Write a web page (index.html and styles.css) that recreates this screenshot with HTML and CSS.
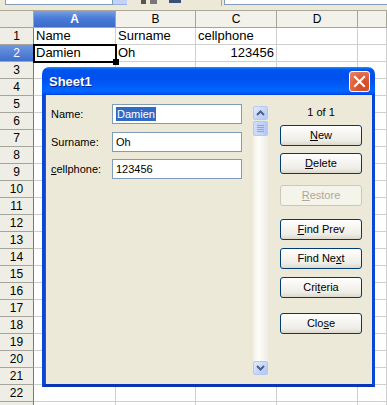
FILE: index.html
```html
<!DOCTYPE html>
<html>
<head>
<meta charset="utf-8">
<link rel="stylesheet" href="styles.css">
</head>
<body>
<div class="toolbar">
  <div class="namebox"></div>
  <div class="dropbtn"></div>
  <div class="tb-icon i1"></div>
  <div class="tb-icon i2"></div>
  <div class="tb-sep"></div>
  <div class="formula"></div>
</div>
<div class="sheet">
  <div class="h corner"></div><div class="h colsel">A</div><div class="h">B</div><div class="h">C</div><div class="h">D</div><div class="h"></div>
  <div class="rh">1</div><div class="c">Name</div><div class="c">Surname</div><div class="c">cellphone</div><div class="c"></div><div class="c"></div>
  <div class="rh rowsel">2</div><div class="c active">Damien</div><div class="c">Oh</div><div class="c num">123456</div><div class="c"></div><div class="c"></div>
  <div class="rh">3</div><div class="c"></div><div class="c"></div><div class="c"></div><div class="c"></div><div class="c"></div>
  <div class="rh">4</div><div class="c"></div><div class="c"></div><div class="c"></div><div class="c"></div><div class="c"></div>
  <div class="rh">5</div><div class="c"></div><div class="c"></div><div class="c"></div><div class="c"></div><div class="c"></div>
  <div class="rh">6</div><div class="c"></div><div class="c"></div><div class="c"></div><div class="c"></div><div class="c"></div>
  <div class="rh">7</div><div class="c"></div><div class="c"></div><div class="c"></div><div class="c"></div><div class="c"></div>
  <div class="rh">8</div><div class="c"></div><div class="c"></div><div class="c"></div><div class="c"></div><div class="c"></div>
  <div class="rh">9</div><div class="c"></div><div class="c"></div><div class="c"></div><div class="c"></div><div class="c"></div>
  <div class="rh">10</div><div class="c"></div><div class="c"></div><div class="c"></div><div class="c"></div><div class="c"></div>
  <div class="rh">11</div><div class="c"></div><div class="c"></div><div class="c"></div><div class="c"></div><div class="c"></div>
  <div class="rh">12</div><div class="c"></div><div class="c"></div><div class="c"></div><div class="c"></div><div class="c"></div>
  <div class="rh">13</div><div class="c"></div><div class="c"></div><div class="c"></div><div class="c"></div><div class="c"></div>
  <div class="rh">14</div><div class="c"></div><div class="c"></div><div class="c"></div><div class="c"></div><div class="c"></div>
  <div class="rh">15</div><div class="c"></div><div class="c"></div><div class="c"></div><div class="c"></div><div class="c"></div>
  <div class="rh">16</div><div class="c"></div><div class="c"></div><div class="c"></div><div class="c"></div><div class="c"></div>
  <div class="rh">17</div><div class="c"></div><div class="c"></div><div class="c"></div><div class="c"></div><div class="c"></div>
  <div class="rh">18</div><div class="c"></div><div class="c"></div><div class="c"></div><div class="c"></div><div class="c"></div>
  <div class="rh">19</div><div class="c"></div><div class="c"></div><div class="c"></div><div class="c"></div><div class="c"></div>
  <div class="rh">20</div><div class="c"></div><div class="c"></div><div class="c"></div><div class="c"></div><div class="c"></div>
  <div class="rh">21</div><div class="c"></div><div class="c"></div><div class="c"></div><div class="c"></div><div class="c"></div>
  <div class="rh">22</div><div class="c"></div><div class="c"></div><div class="c"></div><div class="c"></div><div class="c"></div>
  <div class="rh"></div><div class="c"></div><div class="c"></div><div class="c"></div><div class="c"></div><div class="c"></div>
</div>

<div class="dialog">
  <div class="titlebar">
    <span class="title">Sheet1</span>
    <span class="closex">
      <svg width="13" height="13" viewBox="0 0 13 13"><path d="M2 2 L11 11 M11 2 L2 11" stroke="#fff" stroke-width="2.2" stroke-linecap="square"/></svg>
    </span>
  </div>
  <div class="dbody">
    <div class="form">
      <div class="field f1"><span class="lbl">Name:</span><div class="input"><span class="sel">Damien</span></div></div>
      <div class="field f2"><span class="lbl">Surname:</span><div class="input">Oh</div></div>
      <div class="field f3"><span class="lbl"><u>c</u>ellphone:</span><div class="input">123456</div></div>
    </div>
    <div class="scrollbar">
      <div class="sbbtn">
        <svg width="9" height="6" viewBox="0 0 9 6"><path d="M1 5 L4.5 1.5 L8 5" fill="none" stroke="#4d6185" stroke-width="2"/></svg>
      </div>
      <div class="thumb"><i></i><i></i><i></i><i></i></div>
      <div class="track"></div>
      <div class="sbbtn">
        <svg width="9" height="6" viewBox="0 0 9 6"><path d="M1 1 L4.5 4.5 L8 1" fill="none" stroke="#4d6185" stroke-width="2"/></svg>
      </div>
    </div>
    <div class="actions">
      <div class="count">1 of 1</div>
      <div class="btn b-new"><u>N</u>ew</div>
      <div class="btn b-del"><u>D</u>elete</div>
      <div class="btn b-res disabled"><u>R</u>estore</div>
      <div class="btn b-prev"><u>F</u>ind Prev</div>
      <div class="btn b-next">Find Ne<u>x</u>t</div>
      <div class="btn b-crit">Cri<u>t</u>eria</div>
      <div class="btn b-close">Clo<u>s</u>e</div>
    </div>
  </div>
</div>
</body>
</html>
```
FILE: styles.css
```css
* { box-sizing: border-box; }
html, body { margin: 0; padding: 0; }
body {
  width: 387px;
  height: 405px;
  overflow: hidden;
  position: relative;
  background: #fff;
  font-family: "Liberation Sans", Arial, sans-serif;
  color: #000;
}

/* toolbar remnant */
.toolbar {
  height: 10px;
  background: #ece9d8;
  display: flex;
  align-items: flex-start;
}
.namebox {
  margin-left: 5px;
  width: 108px;
  height: 5px;
  background: #fff;
  border: 1px solid #7f9db9;
  border-top: none;
}
.dropbtn {
  width: 14px;
  height: 5px;
  background: #c3d3f8;
  border-bottom: 1px solid #98b0e0;
}
.tb-icon { height: 4px; }
.i1 { margin-left: 14px; width: 16px; background: linear-gradient(90deg, #555 0 30%, transparent 30% 55%, #777 55% 100%); }
.i2 { margin-left: 12px; width: 12px; background: #3a4f7a; height: 3px; }
.tb-sep { margin-left: 40px; width: 1px; height: 6px; background: #aca899; }
.formula {
  margin-left: 2px;
  flex: 1;
  height: 5px;
  background: #fff;
  border-left: 1px solid #7f9db9;
  border-bottom: 1px solid #7f9db9;
}

/* sheet grid */
.sheet {
  display: grid;
  grid-template-columns: 34px 82px 80px 81px 81px 1fr;
  grid-auto-rows: 17px;
  border-top: 1px solid #aca899;
  font-size: 13px;
}
.h {
  background: #f2f1ea;
  border-right: 1px solid #a6a59c;
  border-bottom: 1px solid #a6a59c;
  font-size: 12px;
  text-align: center;
  line-height: 16px;
  color: #000;
}
.h.corner { background: #ecebe3; }
.h.colsel {
  background: linear-gradient(#7aa0e8, #4a7bd6 45%, #3b6cc9);
  color: #fff;
  font-weight: bold;
}
.rh {
  background: #efeee6;
  border-right: 1px solid #7b7a72;
  border-bottom: 1px solid #a6a59c;
  font-size: 12px;
  text-align: center;
  line-height: 16px;
}
.rh.rowsel {
  background: linear-gradient(#6f97e4, #3e6fcc);
  color: #fff;
}
.c {
  border-right: 1px solid #cfcfcf;
  border-bottom: 1px solid #cfcfcf;
  padding-left: 2px;
  line-height: 16px;
  white-space: nowrap;
  overflow: visible;
}
.c.num { text-align: right; padding-right: 2px; }
.c.active {
  position: relative;
  outline: 2px solid #000;
  outline-offset: -1px;
  z-index: 1;
}
.c.active::after {
  content: "";
  position: absolute;
  right: -4px;
  bottom: -4px;
  width: 6px;
  height: 6px;
  background: #000;
}

/* dialog */
.dialog {
  position: absolute;
  left: 42px;
  top: 67px;
  width: 333px;
  height: 320px;
  display: flex;
  flex-direction: column;
  z-index: 5;
}
.titlebar {
  height: 28px;
  flex: none;
  border-radius: 7px 7px 0 0;
  background: linear-gradient(to bottom, #0997ff 0%, #0053ee 10%, #0050ee 40%, #0066ff 85%, #005bff 93%, #003dd7 100%);
  display: flex;
  align-items: center;
  justify-content: space-between;
  padding: 0 5px 0 7px;
}
.title {
  color: #fff;
  font-weight: bold;
  font-size: 13px;
  text-shadow: 1px 1px 0 #0a1e8a;
  padding-top: 1px;
}
.closex {
  width: 21px;
  height: 21px;
  border: 1px solid #fff;
  border-radius: 3px;
  background: radial-gradient(circle at 70% 75%, #cc4622 0%, #e05a34 45%, #e98a6c 100%);
  display: flex;
  align-items: center;
  justify-content: center;
  margin-top: 1px;
}
.dbody {
  flex: 1;
  display: flex;
  background: #ece9d8;
  border: 3px solid #0a47d6;
  border-top: none;
  box-shadow: inset 1px 0 0 #1e5ad8;
  border-bottom-color: #0a35b8;
}

.form {
  padding: 9px 0 0 6px;
  display: flex;
  flex-direction: column;
}
.field {
  display: flex;
  align-items: center;
  height: 20px;
  font-size: 11px;
}
.f2 { margin-top: 8px; }
.f3 { margin-top: 7px; }
.lbl { width: 61px; }
.input {
  width: 130px;
  height: 20px;
  background: #fff;
  border: 1px solid #7f9db9;
  padding-left: 3px;
  line-height: 18px;
  font-size: 11px;
}
.sel {
  background: #316ac5;
  color: #fff;
  padding: 1px 1px;
}

.scrollbar {
  margin: 11px 0 9px 11px;
  width: 15px;
  display: flex;
  flex-direction: column;
}
.sbbtn {
  height: 14px;
  border: 1px solid #b5c8f0;
  border-radius: 2px;
  background: linear-gradient(135deg, #e3ebfd, #c3d4f9 60%, #b1c6f5);
  display: flex;
  align-items: center;
  justify-content: center;
}
.thumb {
  height: 15px;
  margin-top: 1px;
  border: 1px solid #b5c8f0;
  border-radius: 2px;
  background: linear-gradient(90deg, #cfdcfb, #c3d4f9 60%, #b1c6f5);
  display: flex;
  flex-direction: column;
  align-items: center;
  justify-content: center;
  gap: 1px;
}
.thumb i {
  display: block;
  width: 7px;
  height: 1px;
  background: #8ca4d8;
}
.track {
  flex: 1;
  background: linear-gradient(90deg, #f1efe5 0%, #fdfdfa 35%, #f8f7f2 60%, #efede3 100%);
}

.actions {
  margin-left: 12px;
  width: 82px;
  padding-top: 10px;
  display: flex;
  flex-direction: column;
}
.count {
  height: 14px;
  line-height: 14px;
  font-size: 11px;
  text-align: center;
}
.btn {
  height: 21px;
  border: 1px solid #003c74;
  border-radius: 3px;
  background: linear-gradient(to bottom, #ffffff 0%, #f7f6f2 35%, #eeede7 75%, #dcd8cd 100%);
  font-size: 11px;
  line-height: 19px;
  text-align: center;
}
.btn.disabled {
  border-color: #cac8bb;
  background: #f5f4ea;
  color: #aca899;
}
.b-new { margin-top: 6px; }
.b-del { margin-top: 7px; }
.b-res { margin-top: 11px; }
.b-prev { margin-top: 13px; }
.b-next { margin-top: 8px; }
.b-crit { margin-top: 8px; }
.b-close { margin-top: 15px; }
```
